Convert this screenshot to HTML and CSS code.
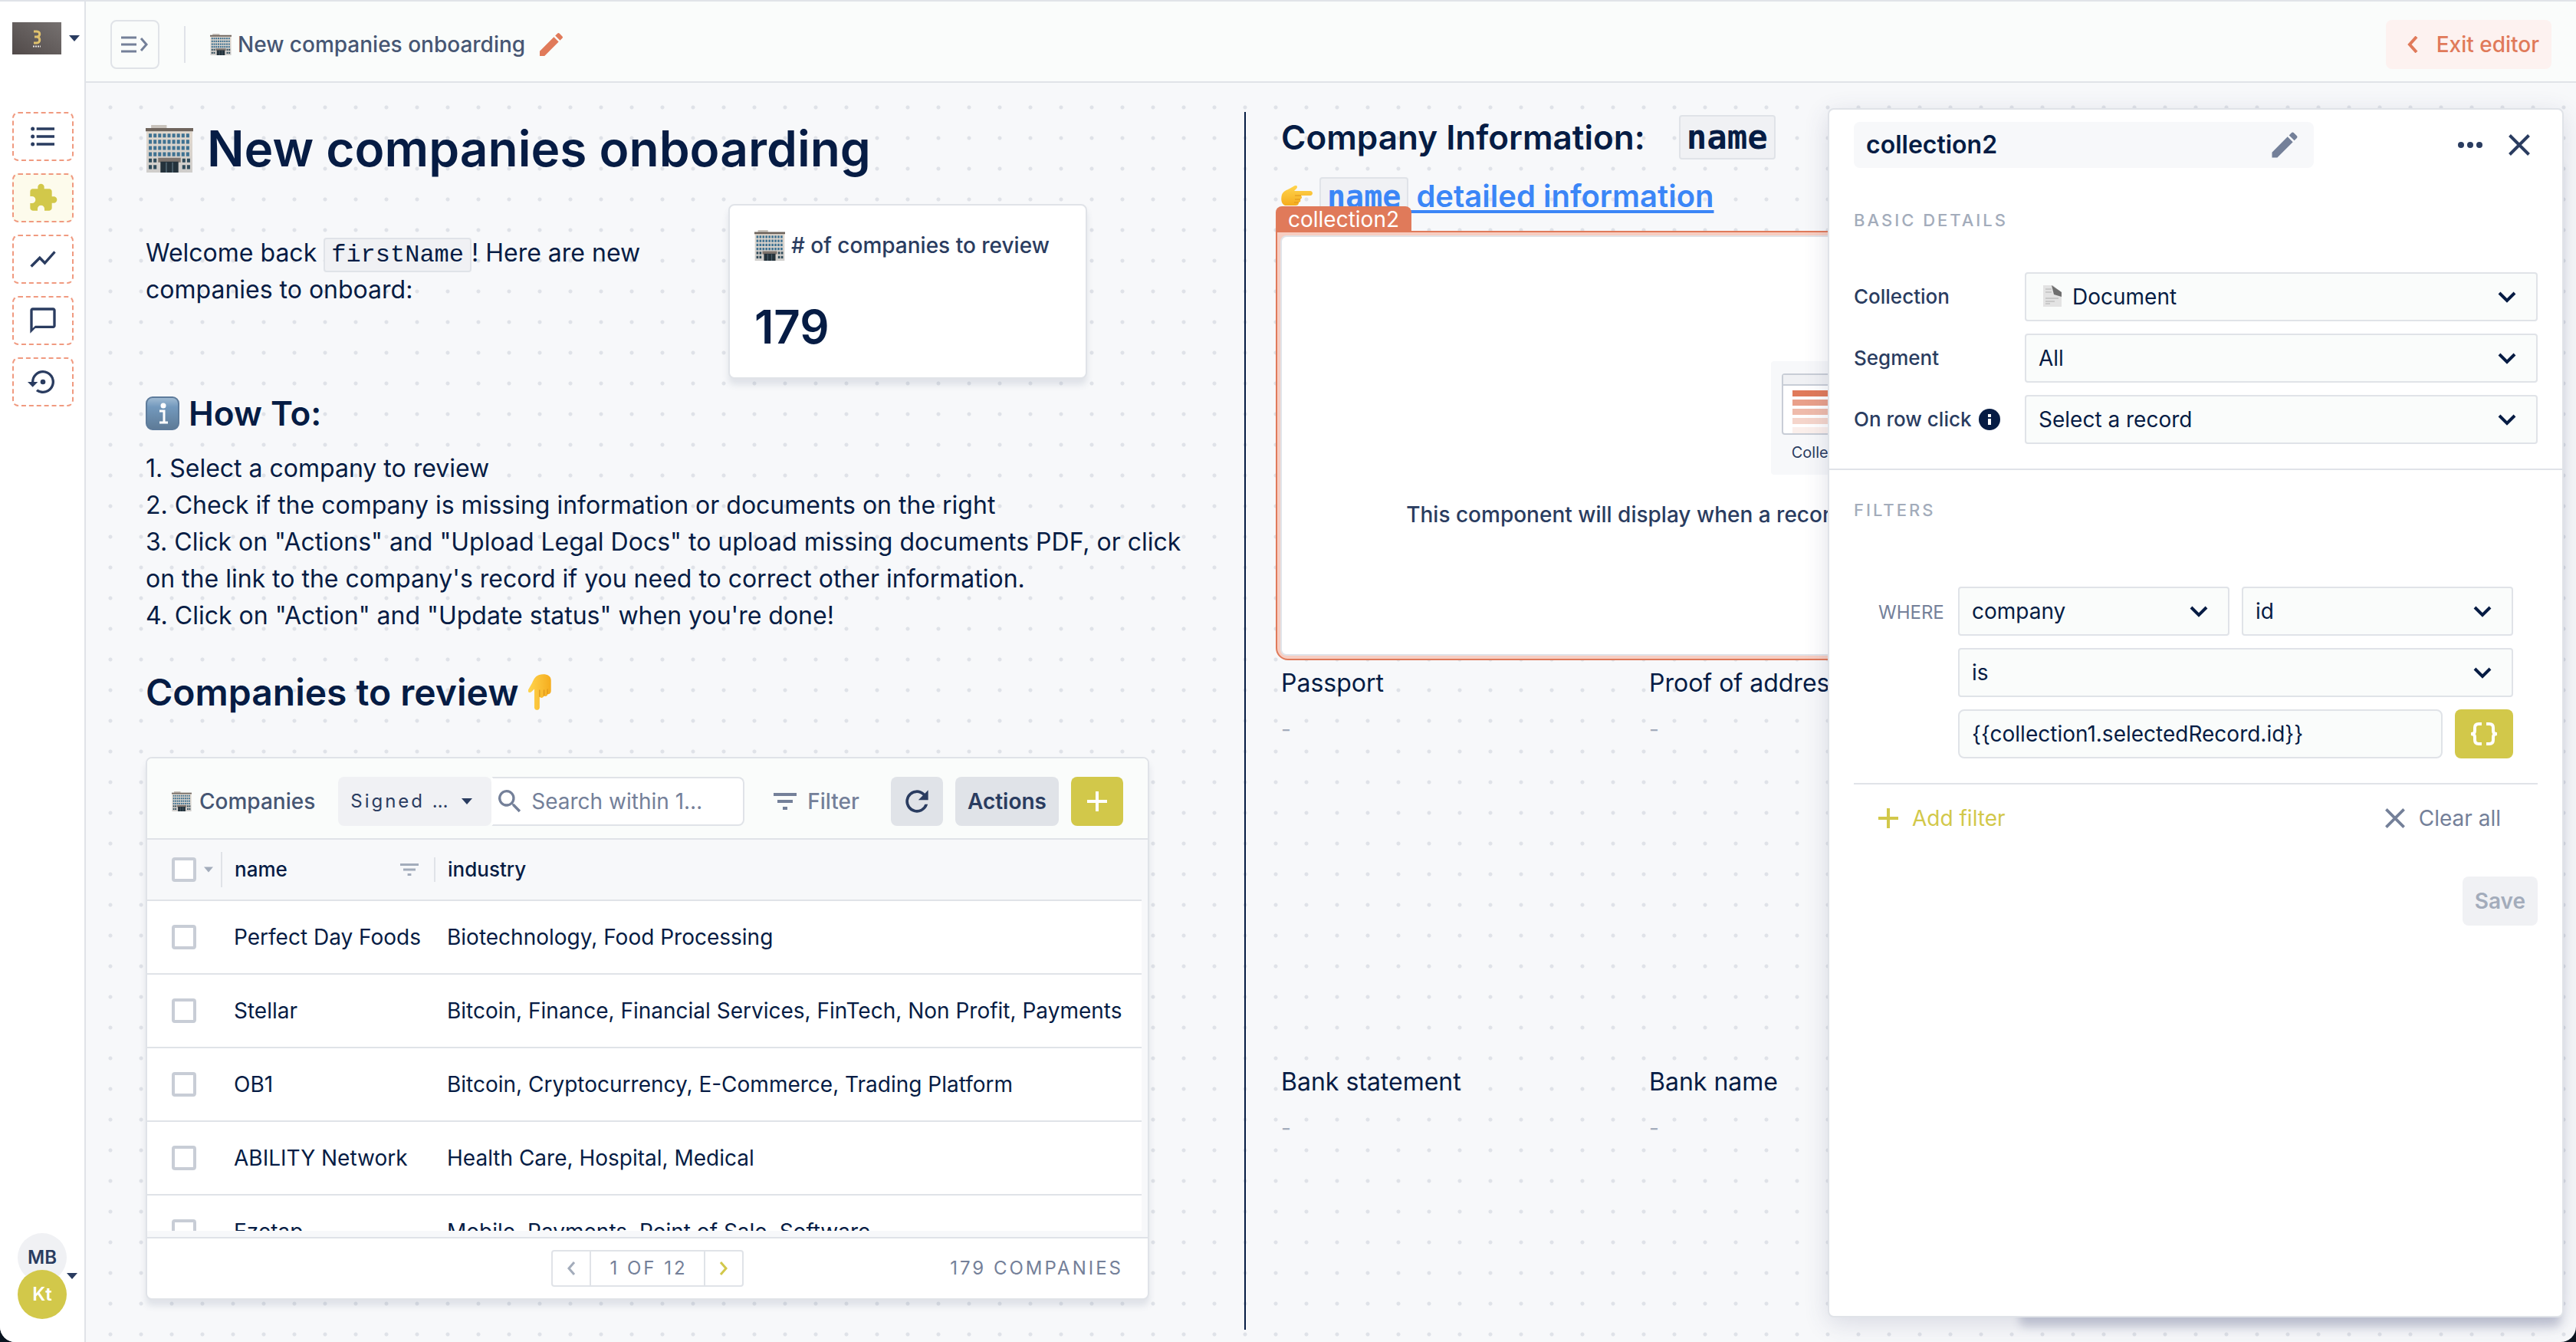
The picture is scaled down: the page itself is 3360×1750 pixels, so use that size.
FILE: index.html
```html
<!DOCTYPE html>
<html lang="en">
<head>
<meta charset="utf-8">
<title>New companies onboarding</title>
<meta name="viewport" content="width=device-width, initial-scale=1">
<link rel="stylesheet" href="styles.css">
</head>
<body>
<svg class="defs" aria-hidden="true">
  <defs>
    <linearGradient id="wall" x1="0" y1="0" x2="0" y2="1"><stop offset="0" stop-color="#e2d9ce"/><stop offset="1" stop-color="#cfcdcb"/></linearGradient>
    <linearGradient id="glass" x1="0" y1="0" x2="0" y2="1"><stop offset="0" stop-color="#a3bdd4"/><stop offset=".3" stop-color="#7399bd"/><stop offset="1" stop-color="#5d7a96"/></linearGradient>
    <linearGradient id="skin" x1="0" y1="0" x2="0" y2="1"><stop offset="0" stop-color="#ffd54f"/><stop offset="1" stop-color="#f5ac1d"/></linearGradient>
    <linearGradient id="plate" x1="0" y1="1" x2="1" y2="0"><stop offset="0" stop-color="#514a49"/><stop offset="1" stop-color="#767170"/></linearGradient>
    <symbol id="building" viewBox="0 0 61 61">
      <path d="M7 0h20v6H7z" fill="#c9c3bc"/>
      <path d="M1 8h59v53H1z" fill="url(#wall)"/>
      <path d="M0 4h61v4H0z" fill="#6f655d"/>
      <g stroke="#3f7292" stroke-width="5" stroke-dasharray="4 2">
        <path d="M4 13.500h53M4 21.500h53M4 29.500h53M4 37.500h53"/>
      </g>
      <g stroke="#2f4b5a" stroke-width="5" stroke-dasharray="4 2">
        <path d="M4 45.500h10M4 54h10M47 45.500h10M47 54h10"/>
      </g>
      <path d="M16 42h29v6H16z" fill="#7d746e"/>
      <path d="M19 47h23v14H19z" fill="#24323b"/>
      <path d="M26.500 48v13M34.500 48v13" stroke="#6d8694"/>
    </symbol>
    <symbol id="pencil" viewBox="0 0 24 24"><path fill="currentColor" d="M3 17.250V21h3.750L17.810 9.940l-3.750-3.750L3 17.250zM20.710 7.040a1 1 0 0 0 0-1.410l-2.340-2.340a1 1 0 0 0-1.410 0l-1.830 1.830 3.750 3.750 1.830-1.830z"/></symbol>
    <symbol id="caret" viewBox="0 0 14 8"><path fill="currentColor" d="M0 0h14L7 8z"/></symbol>
    <symbol id="plus" viewBox="0 0 26 26"><path fill="none" stroke="currentColor" stroke-width="4" d="M13 0v26M0 13h26"/></symbol>
    <symbol id="cross" viewBox="0 0 28 28"><path fill="none" stroke="currentColor" stroke-width="4" d="M1.500 1.500l25 25M26.500 1.500l-25 25"/></symbol>
    <symbol id="filter" viewBox="0 0 30 22"><path fill="currentColor" d="M0 0h30v4H0zM5 9h20v4H5zM12 18h6v4h-6z"/></symbol>
    <symbol id="hand" viewBox="0 0 42 28">
      <path fill="url(#skin)" d="M1 12c2-5 6-6 10-8l7-4c3-1 4 2 2 4l-3 3h21c4 0 4 6 0 6H26c2 2 1 4-1 5 1 2 0 4-2 4 0 3-2 4-4 4H7c-6 0-8-7-6-14z"/>
      <path fill="none" stroke="#dc921a" d="M26 13h-8M25 18h-7M23 22h-6"/>
    </symbol>
  </defs>
</svg>

<div class="app">
  <nav class="rail" aria-label="Workspace">
    <button class="project" aria-label="Switch project">
      <svg width="64" height="42" viewBox="0 0 64 42"><path d="M0 0h64v42H0z" fill="url(#plate)"/><path d="M28 12h4c5 0 5 7 0 7h-3m3 0c5 0 5 8 0 8h-4" fill="none" stroke="#dfc16d" stroke-width="3"/><path d="M27 31.500h10" stroke="#e8e4e2" stroke-width="2" stroke-dasharray="2 1"/></svg>
      <svg width="14" height="8"><use href="#caret"/></svg>
    </button>
    <div class="rail-tools">
      <button class="tool" aria-label="Data"><svg width="40" height="40" viewBox="0 0 24 24"><path fill="currentColor" d="M7 5h14v2H7zM7 11h14v2H7zM7 17h14v2H7z"/><circle cx="4" cy="6" r="1.500" fill="currentColor"/><circle cx="4" cy="12" r="1.500" fill="currentColor"/><circle cx="4" cy="18" r="1.500" fill="currentColor"/></svg></button>
      <button class="tool tool-active" aria-label="Workspaces"><svg width="40" height="40" viewBox="0 0 24 24"><path fill="currentColor" d="M20.500 11H19V7c0-1.100-.9-2-2-2h-4V3.500a2.500 2.500 0 0 0-5 0V5H4c-1.100 0-2 .9-2 2v3.800h1.500a2.700 2.700 0 0 1 0 5.400H2V20c0 1.100.9 2 2 2h3.800v-1.500a2.700 2.700 0 0 1 5.400 0V22H17c1.100 0 2-.9 2-2v-4h1.500a2.500 2.500 0 0 0 0-5z"/></svg></button>
      <button class="tool" aria-label="Dashboards"><svg width="40" height="40" viewBox="0 0 24 24"><path fill="currentColor" d="M3.500 18.490l6-6.010 4 4L22 6.920l-1.410-1.410-7.090 7.970-4-4L2 16.990z"/></svg></button>
      <button class="tool" aria-label="Notes"><svg width="40" height="40" viewBox="0 0 24 24"><path fill="currentColor" d="M20 2H4c-1.100 0-2 .9-2 2v18l4-4h14c1.100 0 2-.9 2-2V4c0-1.100-.9-2-2-2zm0 14H6l-2 2V4h16v12z"/></svg></button>
      <button class="tool" aria-label="Activity"><svg width="40" height="40" viewBox="0 0 24 24"><path fill="currentColor" d="M14 12a2 2 0 1 0-4 0 2 2 0 0 0 4 0zm-2-9a9 9 0 0 0-9 9H0l4 4 4-4H5c0-3.870 3.130-7 7-7s7 3.130 7 7-3.130 7-7 7c-1.510 0-2.910-.49-4.060-1.300l-1.420 1.440A9 9 0 1 0 12 3z"/></svg></button>
    </div>
    <button class="account" aria-label="Account">
      <span class="avatars"><span class="avatar">MB</span><span class="avatar avatar-team">Kt</span></span>
      <svg width="14" height="8"><use href="#caret"/></svg>
    </button>
  </nav>

  <div class="main">
    <header class="topbar">
      <button class="toggle" aria-label="Open list"><svg width="36" height="24" viewBox="0 0 36 24" fill="none" stroke="currentColor" stroke-width="3"><path d="M0 3h20M0 12h20M0 21h20M26 4l7 8-7 8"/></svg></button>
      <span class="rule"></span>
      <div class="crumb"><svg width="28" height="28"><use href="#building"/></svg><span>New companies onboarding</span></div>
      <button class="rename" aria-label="Rename workspace"><svg width="40" height="40"><use href="#pencil"/></svg></button>
      <button class="exit"><svg width="14" height="22" viewBox="0 0 14 22" fill="none" stroke="currentColor" stroke-width="4"><path d="M12 1L3 11l9 10"/></svg>Exit editor</button>
    </header>

    <main class="canvas">
      <section class="pane pane-left">
        <h1><svg width="62" height="62"><use href="#building"/></svg>New companies onboarding</h1>
        <div class="intro">
          <p class="text welcome">Welcome back <code>firstName</code>! Here are new companies to onboard:</p>
          <div class="stat">
            <div class="stat-label"><svg width="40" height="40"><use href="#building"/></svg># of companies to review</div>
            <div class="stat-value">179</div>
          </div>
        </div>
        <h2><svg width="44" height="44" viewBox="0 0 44 44"><rect x="1" y="1" width="42" height="42" rx="8" fill="url(#glass)" stroke="#5d7b9b" stroke-width="2"/><circle cx="23" cy="12" r="3.500" fill="#fff"/><path d="M18 19h6v15m-6 0h11" fill="none" stroke="#fff" stroke-width="3"/></svg>How To:</h2>
        <p class="text">1. Select a company to review<br>2. Check if the company is missing information or documents on the right<br>3. Click on "Actions" and "Upload Legal Docs" to upload missing documents PDF, or click on the link to the company's record if you need to correct other information.<br>4. Click on "Action" and "Update status" when you're done!</p>
        <h2 class="list-title">Companies to review<svg width="32" height="48" viewBox="0 0 28 42"><use href="#hand" width="42" height="28" transform="matrix(0 1 1 0 0 0)"/></svg></h2>

        <section class="collection" aria-label="Companies">
          <div class="toolbar">
            <div class="collection-name"><svg width="26" height="26"><use href="#building"/></svg>Companies</div>
            <div class="lookup">
              <select class="segment" aria-label="Segment"><option>Signed …</option></select>
              <label class="search"><svg width="40" height="40" viewBox="0 0 24 24"><path fill="currentColor" d="M15.500 14h-.79l-.28-.27A6.500 6.500 0 1 0 13.730 14.430l.27.280v.790l5 4.990L20.490 19l-4.990-5zm-6 0a4.500 4.500 0 1 1 0-9 4.500 4.500 0 0 1 0 9z"/></svg><input type="search" placeholder="Search within 1…" aria-label="Search"></label>
            </div>
            <button class="filter"><svg width="30" height="22"><use href="#filter"/></svg>Filter</button>
            <div class="buttons">
              <button class="btn btn-icon" aria-label="Refresh"><svg width="44" height="44" viewBox="0 0 24 24"><path fill="currentColor" d="M17.650 6.350A8 8 0 1 0 19.730 14h-2.080A6 6 0 1 1 12 6c1.660 0 3.140.69 4.220 1.780L13 11h7V4l-2.350 2.350z"/></svg></button>
              <button class="btn">Actions</button>
              <button class="btn btn-icon btn-primary" aria-label="Create"><svg width="26" height="26"><use href="#plus"/></svg></button>
            </div>
          </div>
          <div class="grid-frame">
            <div class="grid-view">
              <table>
                <colgroup><col class="col-check"><col class="col-name"><col></colgroup>
                <thead>
                  <tr>
                    <th><div class="cell"><input type="checkbox" aria-label="Select all"><svg class="muted" width="12" height="8"><use href="#caret"/></svg></div></th>
                    <th><div class="cell cell-tall">name<svg class="muted push" width="24" height="16" viewBox="0 0 30 22" preserveAspectRatio="none"><use href="#filter"/></svg></div></th>
                    <th><div class="cell cell-short">industry</div></th>
                  </tr>
                </thead>
                <tbody>
                  <tr><td><input type="checkbox" aria-label="Select Perfect Day Foods"></td><td>Perfect Day Foods</td><td>Biotechnology, Food Processing</td></tr>
                  <tr><td><input type="checkbox" aria-label="Select Stellar"></td><td>Stellar</td><td>Bitcoin, Finance, Financial Services, FinTech, Non Profit, Payments</td></tr>
                  <tr><td><input type="checkbox" aria-label="Select OB1"></td><td>OB1</td><td>Bitcoin, Cryptocurrency, E-Commerce, Trading Platform</td></tr>
                  <tr><td><input type="checkbox" aria-label="Select ABILITY Network"></td><td>ABILITY Network</td><td>Health Care, Hospital, Medical</td></tr>
                  <tr><td><input type="checkbox" aria-label="Select Ezetap"></td><td>Ezetap</td><td>Mobile, Payments, Point of Sale, Software</td></tr>
                </tbody>
              </table>
            </div>
          </div>
          <footer class="pager-bar">
            <div class="pager">
              <button aria-label="Previous page" disabled><svg width="12" height="18" viewBox="0 0 12 18" fill="none" stroke="currentColor" stroke-width="3"><path d="M10 1L3 9l7 8"/></svg></button>
              <span>1 OF 12</span>
              <button aria-label="Next page"><svg width="12" height="18" viewBox="0 0 12 18" fill="none" stroke="currentColor" stroke-width="3"><path d="M2 1l7 8-7 8"/></svg></button>
            </div>
            <span class="count">179 COMPANIES</span>
          </footer>
        </section>
      </section>

      <section class="pane pane-right">
        <h2 class="company">Company Information: <code>name</code></h2>
        <h3><svg width="42" height="28"><use href="#hand"/></svg><a href="#record"><code>name</code> detailed information</a></h3>
        <div class="selected">
          <span class="tag">collection2</span>
          <div class="placeholder">
            <div class="tile">
              <svg width="120" height="80" viewBox="0 0 120 80"><rect x="1" y="1" width="118" height="78" rx="3" fill="#fff" stroke="#c8cdd6" stroke-width="2"/><path d="M2 2h116v12H2z" fill="#f0f1f4"/><path d="M1 15h118" stroke="#c8cdd6" stroke-width="2"/><path d="M14 22h92v8H14z" fill="#e07a5a"/><path d="M14 34h92v8H14z" fill="#e9a08a"/><path d="M14 46h92v8H14z" fill="#efbbab"/><path d="M14 58h92v8H14z" fill="#f5d5cb"/><path d="M14 70h92v8H14z" fill="#fbefeb"/></svg>
              <span>Collection</span>
            </div>
            <p>This component will display when a record is selected in the Companies collection</p>
          </div>
        </div>
        <dl class="fields">
          <div><dt>Passport</dt><dd>-</dd></div>
          <div><dt>Proof of address</dt><dd>-</dd></div>
          <div><dt>Bank statement</dt><dd>-</dd></div>
          <div><dt>Bank name</dt><dd>-</dd></div>
        </dl>
      </section>

      <aside class="panel" aria-label="Component settings">
        <div class="panel-body">
          <header class="panel-head">
            <label class="name-field"><input type="text" value="collection2" aria-label="Component name"><svg width="44" height="44"><use href="#pencil"/></svg></label>
            <div class="panel-actions">
              <button aria-label="More"><svg width="32" height="8" viewBox="0 0 32 8"><circle cx="4" cy="4" r="4" fill="currentColor"/><circle cx="16" cy="4" r="4" fill="currentColor"/><circle cx="28" cy="4" r="4" fill="currentColor"/></svg></button>
              <button aria-label="Close"><svg width="28" height="28"><use href="#cross"/></svg></button>
            </div>
          </header>
          <section class="details">
            <h4>BASIC DETAILS</h4>
            <div class="form">
              <label for="collection">Collection</label>
              <div class="with-icon"><select id="collection"><option>Document</option></select><svg width="24" height="28" viewBox="0 0 24 28"><path d="M0 0h13l11 10v18H0z" fill="#e3e3e3"/><path d="M11 0l13 9v6l-10-3z" fill="#6f6f6f"/><path d="M3 5h8M3 9h8M3 17h17M3 21h12M3 24h6" stroke="#c9c9c9" stroke-width="2"/></svg></div>
              <label for="segment">Segment</label>
              <select id="segment"><option>All</option></select>
              <label for="click">On row click<svg width="28" height="28" viewBox="0 0 28 28"><circle cx="14" cy="14" r="14" fill="#061c44"/><path d="M14 7v4M14 13v8" stroke="#fff" stroke-width="4"/></svg></label>
              <select id="click"><option>Select a record</option></select>
            </div>
          </section>
          <section class="filters">
            <h4>FILTERS</h4>
            <div class="rules">
              <span class="where">WHERE</span>
              <div class="conditions">
                <div class="pair"><select aria-label="Relation"><option>company</option></select><select aria-label="Field"><option>id</option></select></div>
                <select aria-label="Operator"><option>is</option></select>
                <div class="value"><input type="text" value="{{collection1.selectedRecord.id}}" aria-label="Value"><button class="btn-braces" aria-label="Insert variable"><svg width="38" height="32" viewBox="0 0 38 32" fill="none" stroke="currentColor" stroke-width="4"><path d="M16 3h-4q-5 0-5 5v4q0 4-5 4 5 0 5 4v4q0 5 5 5h4M22 3h4q5 0 5 5v4q0 4 5 4-5 0-5 4v4q0 5-5 5h-4"/></svg></button></div>
              </div>
            </div>
            <div class="filter-actions">
              <button class="add"><svg width="26" height="26"><use href="#plus"/></svg>Add filter</button>
              <button class="clear"><svg width="26" height="26"><use href="#cross"/></svg>Clear all</button>
            </div>
            <button class="save" disabled>Save</button>
          </section>
        </div>
      </aside>
    </main>
  </div>
</div>
</body>
</html>
```
FILE: styles.css
```css
:root {
  --ink: #061c44;
  --ink-2: #2a3c60;
  --ink-3: #465673;
  --grey: #748099;
  --mute: #a3acbb;
  --line: #e0e3e8;
  --soft: #f7f8fa;
  --paper: #fafcfb;
  --lime: #d2c84a;
  --coral: #e07a5a;
}

* { box-sizing: border-box; }

body {
  margin: 0;
  background: #0a1420;
  color: var(--ink);
  font: 400 28px/40px Inter, "Liberation Sans", sans-serif;
}

h1, h2, h3, h4, p, dl, dd { margin: 0; }
svg { display: block; flex: none; }
button, input, select { font: inherit; color: inherit; margin: 0; }
button { display: flex; align-items: center; justify-content: center; padding: 0; border: 0; background: none; }
.defs { position: absolute; width: 0; height: 0; }

.app {
  display: grid;
  grid-template-columns: 112px minmax(0, 1fr);
  min-height: 100vh;
  border-top: 2px solid var(--line);
  border-radius: 0 0 20px 20px;
  overflow: hidden;
  background: var(--soft);
}

/* Left rail */
.rail {
  display: flex;
  flex-direction: column;
  padding: 27px 0 30px;
  border-right: 2px solid var(--line);
  background: #fff;
  color: var(--ink-2);
}
.project { gap: 10px; padding-left: 16px; justify-content: flex-start; }
.rail-tools { display: grid; gap: 16px; padding: 75px 14px 0 16px; }
.tool { height: 64px; border: 2px dashed #f09a80; border-radius: 8px; }
.tool-active { background: #fdfbec; color: var(--lime); }
.account { margin-top: auto; padding-left: 23px; justify-content: flex-start; }
.avatars { display: grid; }
.avatar {
  width: 64px;
  height: 64px;
  border-radius: 50%;
  background: #f0f1f4;
  font-size: 24px;
  font-weight: 600;
  line-height: 64px;
  text-align: center;
}
.avatar-team { margin-top: -16px; background: var(--lime); color: #fff; }

.main { display: flex; flex-direction: column; min-width: 0; }

/* Top bar */
.topbar {
  display: flex;
  align-items: center;
  padding: 24px 32px 16px;
  border-bottom: 2px solid var(--line);
  background: var(--paper);
  color: var(--ink-3);
  font-weight: 500;
}
.toggle { width: 64px; height: 64px; border: 2px solid var(--line); border-radius: 8px; color: var(--grey); }
.rule { width: 2px; height: 48px; margin: 0 32px; background: var(--line); }
.crumb { display: flex; align-items: center; gap: 8px; }
.rename { margin-left: 14px; color: var(--coral); }
.exit {
  gap: 24px;
  height: 64px;
  margin-left: auto;
  padding: 0 16px 0 28px;
  border-radius: 8px;
  background: #fdf2f0;
  color: var(--coral);
  font-weight: 500;
}

/* Canvas */
.canvas {
  position: relative;
  display: grid;
  grid-template-columns: minmax(0, 1511fr) minmax(0, 1737fr);
  flex: 1;
  overflow: hidden;
}
.canvas::before {
  content: "";
  position: absolute;
  inset: 12px 0 0 12px;
  background: radial-gradient(circle at 20px 20px, #dfe2e8 2px, transparent 3px) 0 0 / 40px 40px;
}
.pane { position: relative; }
.pane-left { padding: 46px 72px 54px 78px; }

h1 { display: flex; align-items: center; gap: 18px; font-size: 64px; font-weight: 600; line-height: 80px; }
h2 { display: flex; align-items: center; gap: 12px; font-size: 44px; font-weight: 600; line-height: 56px; }
.text { font-size: 32px; line-height: 48px; }
code {
  border: 2px solid var(--line);
  border-radius: 4px;
  background: #f0f1f4;
  font-family: "Liberation Mono", monospace;
  font-size: 1em;
}

.intro { display: grid; grid-template-columns: 760px 468px; margin-top: 32px; }
.welcome { padding: 40px 100px 0 0; }
.welcome code { padding: 2px 8px; line-height: 32px; }
.stat {
  height: 228px;
  padding: 32px;
  border: 2px solid var(--line);
  border-radius: 8px;
  background: #fff;
  box-shadow: 0 8px 8px rgba(60, 70, 110, .12);
}
.stat-label { display: flex; align-items: center; gap: 8px; color: var(--ink-2); font-weight: 500; }
.stat-value { margin-top: 52px; font-size: 60px; font-weight: 600; line-height: 68px; }
.intro + h2 { margin: 17px 0 20px; }
.list-title { margin: 48px 0 56px; font-size: 48px; }

/* Collection table */
.collection {
  margin-right: 52px;
  border: 2px solid var(--line);
  border-radius: 8px;
  background: #fff;
  box-shadow: 0 8px 8px rgba(60, 70, 110, .12);
  overflow: hidden;
}
.toolbar {
  display: flex;
  align-items: center;
  padding: 24px 32px 16px;
  border-bottom: 2px solid var(--line);
  background: var(--paper);
}
.collection-name { display: flex; align-items: center; gap: 10px; color: var(--ink-3); font-weight: 500; }
.lookup { display: flex; margin-left: 30px; }
select {
  appearance: none;
  width: 100%;
  height: 64px;
  padding: 0 64px 0 16px;
  border: 2px solid var(--line);
  border-radius: 4px;
  background: var(--paper) url("data:image/svg+xml,%3Csvg xmlns='http://www.w3.org/2000/svg' width='26' height='16'%3E%3Cpath d='M3 3l10 10L23 3' fill='none' stroke='%23061c44' stroke-width='4'/%3E%3C/svg%3E") no-repeat right 25px center;
}
.segment {
  width: 200px;
  padding: 0 16px;
  border: 0;
  border-radius: 8px;
  background: #f0f1f4 url("data:image/svg+xml,%3Csvg xmlns='http://www.w3.org/2000/svg' width='14' height='8'%3E%3Cpath d='M0 0h14L7 8z' fill='%232a3c60'/%3E%3C/svg%3E") no-repeat right 25px center;
  color: var(--ink-2);
  font-size: 24px;
  letter-spacing: 3px;
}
.search {
  display: flex;
  align-items: center;
  gap: 8px;
  width: 330px;
  height: 64px;
  padding: 0 2px;
  border: 2px solid var(--line);
  border-left-color: #fff;
  border-radius: 0 8px 8px 0;
  background: #fff;
  color: var(--grey);
}
.search input { flex: 1; min-width: 0; padding: 0; border: 0; background: none; }
.search input::placeholder { color: var(--grey); opacity: 1; }
.filter { gap: 14px; margin-left: 38px; color: var(--grey); font-weight: 500; }
.buttons { display: flex; gap: 16px; margin-left: auto; }
.btn { height: 64px; padding: 0 16px; border-radius: 8px; background: var(--line); color: var(--ink-2); font-weight: 600; }
.btn-icon { width: 68px; padding: 0; }
.btn-primary { background: var(--lime); color: #fff; }

.grid-frame { padding: 0 8px 8px 0; background: var(--soft); }
.grid-view { height: 510px; overflow: hidden; }
table { width: 100%; border-collapse: separate; border-spacing: 0; table-layout: fixed; }
.col-check { width: 96px; }
.col-name { width: 278px; }
th { height: 80px; padding: 0; border-bottom: 2px solid var(--line); font-size: 26px; font-weight: 500; text-align: left; }
td { height: 96px; padding: 0 0 0 17px; border-bottom: 2px solid var(--line); background: #fff; white-space: nowrap; }
td:first-child { padding-left: 32px; }
.cell { display: flex; align-items: center; gap: 10px; padding-left: 32px; }
.cell-tall, .cell-short { padding: 0 20px 0 16px; border-left: 2px solid var(--line); line-height: 46px; }
.cell-short { line-height: 32px; }
.muted { color: var(--mute); }
.push { margin-left: auto; }
input[type="checkbox"] {
  display: block;
  appearance: none;
  width: 32px;
  height: 32px;
  border: 4px solid #c8cdd6;
  border-radius: 4px;
  background: #fff;
}
.pager-bar {
  display: grid;
  grid-template-columns: 1fr auto 1fr;
  align-items: center;
  height: 80px;
  padding: 0 32px;
  border-top: 2px solid var(--line);
  color: var(--grey);
  font-size: 24px;
  letter-spacing: 3px;
}
.pager { display: flex; grid-column: 2; height: 48px; border: 2px solid var(--line); border-radius: 4px; line-height: 44px; }
.pager span { padding: 0 21px 0 24px; border: solid var(--line); border-width: 0 2px; }
.pager button { width: 48px; color: var(--lime); }
.pager button:disabled { color: var(--mute); }
.count { text-align: right; }

/* Record pane */
.pane-right { margin: 38px 0 16px; padding: 4px 0 0 46px; border-left: 2px solid var(--ink); }
.pane-right code { padding: 0 8px; font-family: "DejaVu Sans Mono", monospace; font-weight: 700; }
.company { gap: 44px; height: 58px; }
.company code { line-height: 54px; }
h3 { display: flex; align-items: center; gap: 8px; height: 52px; margin: 22px 0 19px; font-size: 40px; font-weight: 600; line-height: 48px; }
a { color: #3b86f7; text-decoration: underline; text-decoration-thickness: 4px; text-underline-offset: 4px; }
.selected {
  position: relative;
  width: 1440px;
  margin-left: -7px;
  padding: 4px;
  border: 2px solid var(--coral);
  border-radius: 0 16px 16px;
  background: #f7cdc1;
}
.tag {
  position: absolute;
  left: -2px;
  bottom: 100%;
  padding: 0 16px;
  border-radius: 8px 8px 0 0;
  background: var(--coral);
  color: #fff;
  line-height: 34px;
}
.placeholder {
  display: flex;
  flex-direction: column;
  align-items: center;
  gap: 32px;
  height: 548px;
  padding-top: 162px;
  border: 2px solid var(--line);
  border-radius: 8px;
  background: #fff;
  color: var(--ink-2);
  font-weight: 500;
  white-space: nowrap;
}
.tile { width: 148px; height: 148px; padding: 16px 14px; border-radius: 4px; background: var(--soft); font-size: 20px; font-weight: 400; text-align: center; }
.tile svg { margin-bottom: 3px; }
.fields { display: grid; grid-template-columns: 480px 480px; grid-template-rows: 520px auto; padding-top: 10px; }
dt { font-size: 32px; }
dd { margin-top: 20px; color: var(--mute); }

/* Settings panel floats over the canvas */
.panel { position: absolute; z-index: 1; inset: 33px 16px 32px auto; width: 960px; }
.panel::before {
  content: "";
  position: absolute;
  inset: 60px 4px 0 250px;
  border-radius: 8px;
  box-shadow: 0 12px 12px rgba(50, 60, 110, .22);
}
.panel-body {
  position: relative;
  height: 100%;
  border: 2px solid var(--line);
  border-radius: 8px;
  background: #fff;
  box-shadow: 0 8px 32px rgba(60, 70, 110, .16);
}
.panel-head { display: flex; align-items: center; justify-content: space-between; padding: 16px 42px 0 32px; }
.name-field { display: flex; align-items: center; width: 600px; height: 60px; padding: 0 16px; border-radius: 8px; background: var(--soft); color: var(--grey); }
.name-field input { flex: 1; min-width: 0; padding: 0; border: 0; background: none; color: var(--ink); font-size: 32px; font-weight: 600; }
.panel-actions { display: flex; gap: 34px; color: var(--ink-2); }
h4 { color: var(--mute); font-size: 22px; font-weight: 500; line-height: 32px; letter-spacing: 3px; }
.details { padding: 52px 32px 32px; border-bottom: 2px solid var(--line); }
.form { display: grid; grid-template-columns: 223px 1fr; align-items: center; gap: 16px 0; margin-top: 52px; color: var(--ink); }
.form label { display: flex; align-items: center; gap: 10px; color: var(--ink-2); font-size: 26px; font-weight: 500; }
.with-icon { position: relative; }
.with-icon select { padding-left: 60px; }
.with-icon svg { position: absolute; left: 24px; top: 17px; }
.filters { padding: 36px 32px; }
.rules { display: flex; justify-content: space-between; margin-top: 84px; padding: 0 32px 32px; border-bottom: 2px solid var(--line); }
.where { color: var(--grey); font-size: 24px; line-height: 68px; }
.conditions { display: grid; gap: 16px; width: 724px; }
.pair { display: grid; grid-template-columns: 1fr 1fr; gap: 16px; }
.value { display: grid; grid-template-columns: 1fr 76px; gap: 16px; }
.value input { min-width: 0; height: 64px; padding: 0 16px; border: 2px solid var(--line); border-radius: 8px; background: var(--paper); }
.btn-braces { border-radius: 8px; background: var(--lime); color: #fff; }
.filter-actions { display: flex; justify-content: space-between; padding: 24px 48px 0 32px; }
.add { gap: 18px; color: var(--lime); }
.clear { gap: 18px; color: var(--grey); }
.save { height: 64px; margin: 56px 0 0 auto; padding: 0 16px; border-radius: 8px; background: #f0f1f4; color: var(--mute); font-weight: 600; }
```
